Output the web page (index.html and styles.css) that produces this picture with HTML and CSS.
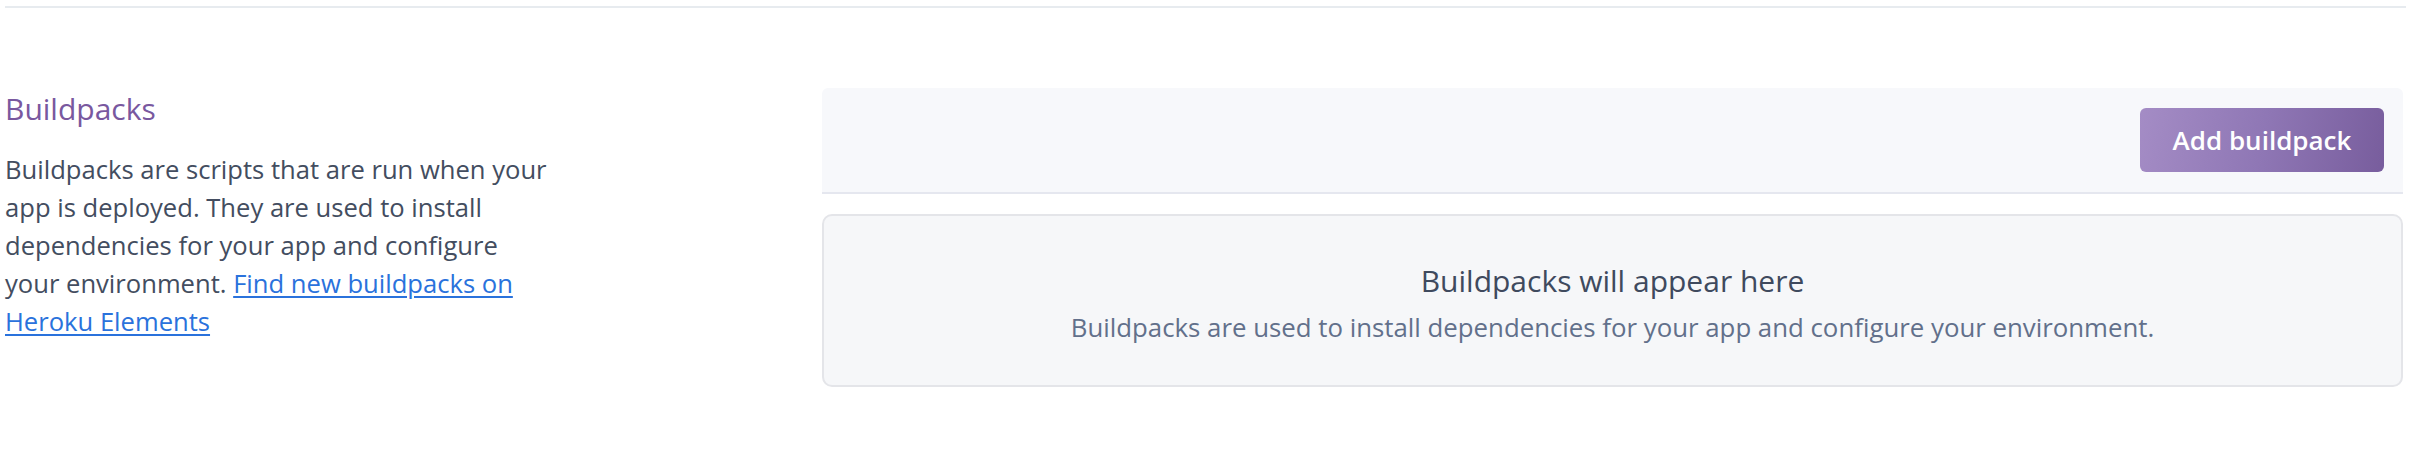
FILE: index.html
```html
<!DOCTYPE html>
<html lang="en">
<head>
<meta charset="utf-8">
<title>Buildpacks</title>
<link rel="stylesheet" href="styles.css">
</head>
<body>
<div class="page">
  <div class="divider"></div>
  <section class="settings-section">
    <div class="section-info">
      <h2 class="section-title">Buildpacks</h2>
      <p class="section-desc">Buildpacks are scripts that are run when your app is deployed. They are used to install dependencies for your app and configure your environment. <a class="link" href="#">Find new buildpacks on Heroku Elements</a></p>
    </div>
    <div class="section-body">
      <div class="panel-header">
        <button class="btn-primary" type="button">Add buildpack</button>
      </div>
      <div class="empty-state">
        <div class="empty-title">Buildpacks will appear here</div>
        <div class="empty-text">Buildpacks are used to install dependencies for your app and configure your environment.</div>
      </div>
    </div>
  </section>
</div>
</body>
</html>
```

FILE: styles.css
```css
html, body {
  margin: 0;
  padding: 0;
  background: #ffffff;
}

body {
  font-family: "Open Sans", "Noto Sans", sans-serif;
  color: #434d60;
}

.page {
  padding: 0 24px 0 5px;
}

.divider {
  margin-top: 6px;
  height: 2px;
  background: #e7ebef;
}

.settings-section {
  display: grid;
  grid-template-columns: 552px 1fr;
  column-gap: 265px;
  align-items: start;
  margin-top: 80px;
  padding-right: 3px;
}

.section-title {
  margin: 3px 0 0 0;
  font-size: 30px;
  line-height: 36px;
  font-weight: 400;
  color: #79589f;
}

.section-desc {
  margin: 24px 0 0 0;
  font-size: 25.6px;
  line-height: 38px;
  color: #434d60;
}

.link {
  color: #2a72dc;
  text-decoration: underline;
  text-underline-offset: 3px;
}

.panel-header {
  display: flex;
  justify-content: flex-end;
  padding: 20px 19px;
  background: #f7f8fb;
  border-radius: 6px 6px 0 0;
  border-bottom: 2px solid #e5e7ef;
}

.btn-primary {
  width: 244px;
  height: 64px;
  padding: 0;
  border: 0;
  border-radius: 6px;
  background: linear-gradient(100deg, #a48cc5 0%, #8f77b5 50%, #785d9d 100%);
  color: #ffffff;
  font-family: "Open Sans", "Noto Sans", sans-serif;
  font-size: 26px;
  font-weight: 600;
  text-align: center;
  cursor: pointer;
}

.empty-state {
  margin-top: 20px;
  padding: 47px 20px 39px;
  border: 2px solid #e4e5e9;
  border-radius: 10px;
  background: #f6f7f9;
  text-align: center;
}

.empty-title {
  font-size: 30px;
  line-height: 35px;
  color: #3f4a5e;
}

.empty-text {
  margin-top: 10px;
  font-size: 25.8px;
  line-height: 38px;
  color: #62708b;
}
```
